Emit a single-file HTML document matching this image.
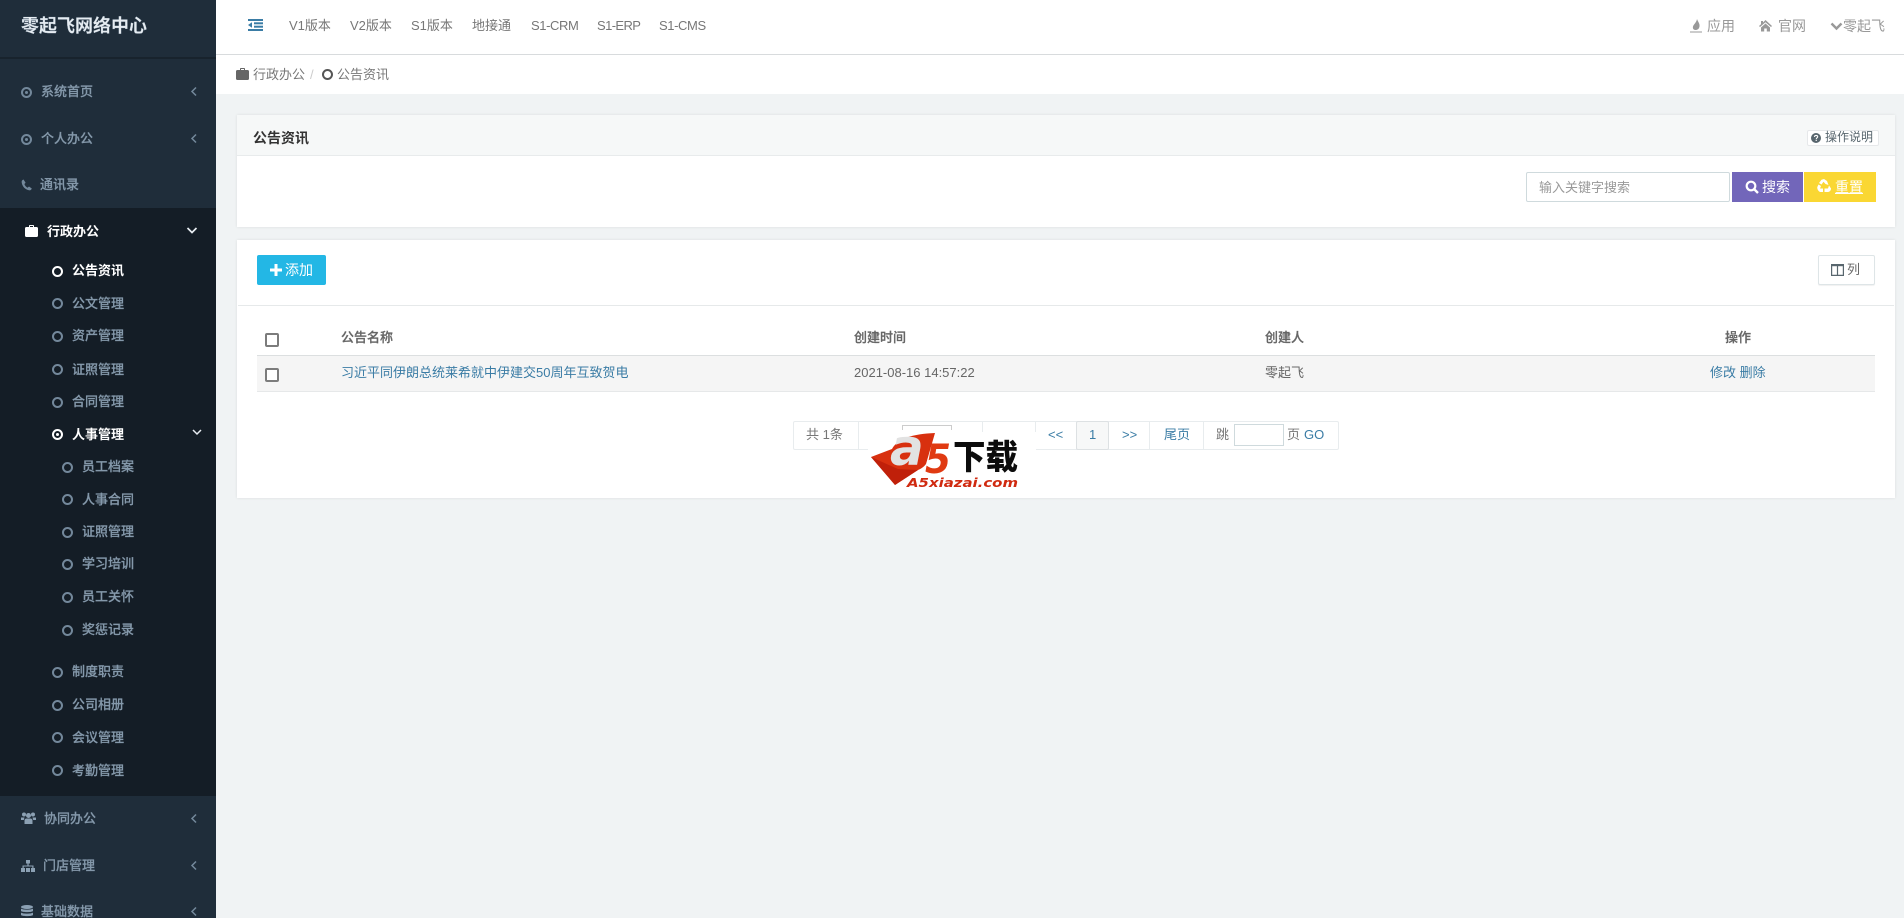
<!DOCTYPE html>
<html lang="zh-CN"><head><meta charset="utf-8"><title>公告资讯</title>
<style>
*{box-sizing:border-box}
html,body{margin:0;padding:0;width:1904px;height:918px;overflow:hidden;background:#f0f3f4;font-family:"Liberation Sans","Noto Sans CJK SC",sans-serif;font-size:13px;color:#58666e}
.a{position:absolute;white-space:nowrap}
.t{position:absolute;white-space:nowrap;line-height:20px;height:20px}
#side{position:absolute;left:0;top:0;width:216px;height:918px;background:#1f2d3a;overflow:hidden}
#sub{position:absolute;left:0;top:208px;width:216px;height:588px;background:#141d26}
#side .t{color:#8498aa;font-weight:500;-webkit-text-stroke:.2px #8498aa}
#side .w{color:#fff;font-weight:700;-webkit-text-stroke:0}
.r{position:absolute;width:11px;height:11px;border:2px solid #73889b;border-radius:50%}
.r.w2{border-color:#fff}
.rd{position:absolute;width:11px;height:11px;border:2px solid #73889b;border-radius:50%}
.rd:after{content:"";position:absolute;left:2px;top:2px;width:3px;height:3px;background:#73889b;border-radius:50%}
.rd.w2{border-color:#fff}.rd.w2:after{background:#fff}
svg{position:absolute;display:block}
.bar{position:absolute;background:#fff}
.nav{position:absolute;top:16px;line-height:20px;color:#777;font-size:13px;white-space:nowrap}
.panel{position:absolute;left:237px;width:1658px;background:#fff;box-shadow:0 0 3px rgba(0,0,0,.09)}
.cb{position:absolute;width:14px;height:14px;border:2px solid #7c7c7c;border-radius:2px;background:#fff}
.lnk{color:#3a7ca5}
.sep{position:absolute;top:421px;width:1px;height:29px;background:#e8ecee}
.h{color:#666;font-weight:500;-webkit-text-stroke:.25px #666}
</style></head><body>

<div id="side">
<div id="sub"></div>
<div class="a" style="left:0;top:57px;width:216px;height:2px;background:#18232d"></div>
<div class="t" style="left:21px;top:15px;font-size:18px;font-weight:700;color:#e6ecf1;line-height:22px;height:22px">零起飞网络中心</div>

<div class="rd" style="left:21px;top:87px"></div><div class="t" style="left:41px;top:82px">系统首页</div>
<svg style="left:190px;top:86px" width="8" height="11" viewBox="0 0 8 11"><path d="M6 1.5 2 5.500 6 9.500" fill="none" stroke="#73889b" stroke-width="1.500"/></svg>
<div class="rd" style="left:21px;top:134px"></div><div class="t" style="left:41px;top:129px">个人办公</div>
<svg style="left:190px;top:133px" width="8" height="11" viewBox="0 0 8 11"><path d="M6 1.5 2 5.500 6 9.500" fill="none" stroke="#73889b" stroke-width="1.500"/></svg>
<svg style="left:21px;top:179px" width="11" height="12" viewBox="0 0 11 12"><path d="M2.500 .5C1 1 .5 2 .7 3.500 1.300 7.500 4 10.500 8 11.300c1.300.2 2.400-.4 2.800-1.800L8 7.500 6.500 8.700C5 8 3.800 6.500 3.400 5L4.600 3.700Z" fill="#73889b"/></svg>
<div class="t" style="left:40px;top:175px">通讯录</div>

<svg style="left:25px;top:225px" width="13" height="12" viewBox="0 0 13 12"><path d="M4 2V.8C4 .4 4.300 0 4.800 0h3.400C8.700 0 9 .4 9 .8V2h2.600c.8 0 1.400.6 1.400 1.400v7.200c0 .8-.6 1.400-1.400 1.400H1.400C.6 12 0 11.400 0 10.600V3.400C0 2.600.6 2 1.400 2ZM5 2h3V1H5Z" fill="#fff" fill-rule="evenodd"/></svg>
<div class="t w" style="left:47px;top:222px">行政办公</div>
<svg style="left:186px;top:226px" width="12" height="9" viewBox="0 0 12 9"><path d="M1.500 2 6 6.500 10.500 2" fill="none" stroke="#e8edf2" stroke-width="1.700"/></svg>

<div class="r w2" style="left:52px;top:266px"></div><div class="t w" style="left:72px;top:261px">公告资讯</div>
<div class="r" style="left:52px;top:298px"></div><div class="t" style="left:72px;top:294px">公文管理</div>
<div class="r" style="left:52px;top:331px"></div><div class="t" style="left:72px;top:326px">资产管理</div>
<div class="r" style="left:52px;top:364px"></div><div class="t" style="left:72px;top:360px">证照管理</div>
<div class="r" style="left:52px;top:397px"></div><div class="t" style="left:72px;top:392px">合同管理</div>
<div class="rd w2" style="left:52px;top:429px"></div><div class="t w" style="left:72px;top:425px">人事管理</div>
<svg style="left:191px;top:428px" width="12" height="9" viewBox="0 0 12 9"><path d="M2 2 6 6 10 2" fill="none" stroke="#e8edf2" stroke-width="1.500"/></svg>
<div class="r" style="left:62px;top:462px"></div><div class="t" style="left:82px;top:457px">员工档案</div>
<div class="r" style="left:62px;top:494px"></div><div class="t" style="left:82px;top:490px">人事合同</div>
<div class="r" style="left:62px;top:527px"></div><div class="t" style="left:82px;top:522px">证照管理</div>
<div class="r" style="left:62px;top:559px"></div><div class="t" style="left:82px;top:554px">学习培训</div>
<div class="r" style="left:62px;top:592px"></div><div class="t" style="left:82px;top:587px">员工关怀</div>
<div class="r" style="left:62px;top:625px"></div><div class="t" style="left:82px;top:620px">奖惩记录</div>
<div class="r" style="left:52px;top:667px"></div><div class="t" style="left:72px;top:662px">制度职责</div>
<div class="r" style="left:52px;top:700px"></div><div class="t" style="left:72px;top:695px">公司相册</div>
<div class="r" style="left:52px;top:732px"></div><div class="t" style="left:72px;top:728px">会议管理</div>
<div class="r" style="left:52px;top:765px"></div><div class="t" style="left:72px;top:761px">考勤管理</div>

<svg style="left:21px;top:812px" width="15" height="12" viewBox="0 0 15 12" fill="#8ba0b3"><circle cx="3" cy="2.500" r="2"/><circle cx="12" cy="2.500" r="2"/><circle cx="7.500" cy="3.500" r="2.500"/><path d="M0 5.500h3.500L2.800 8H0ZM15 5.500h-3.500l.7 2.500H15ZM3.500 12V8.500C3.500 7 4.500 6.500 5.500 6.500h4c1 0 2 .5 2 2V12Z"/></svg>
<div class="t" style="left:44px;top:809px">协同办公</div>
<svg style="left:190px;top:813px" width="8" height="11" viewBox="0 0 8 11"><path d="M6 1.5 2 5.500 6 9.500" fill="none" stroke="#73889b" stroke-width="1.500"/></svg>
<svg style="left:21px;top:860px" width="14" height="12" viewBox="0 0 14 12" fill="#8ba0b3"><rect x="5" y="0" width="4" height="3.500"/><rect x="0" y="8" width="4" height="4"/><rect x="5" y="8" width="4" height="4"/><rect x="10" y="8" width="4" height="4"/><path d="M1.500 8V5.500h4.900V3.500h1.200v2h4.900V8h-1.200V6.500H2.700V8Z"/></svg>
<div class="t" style="left:43px;top:856px">门店管理</div>
<svg style="left:190px;top:860px" width="8" height="11" viewBox="0 0 8 11"><path d="M6 1.5 2 5.500 6 9.500" fill="none" stroke="#73889b" stroke-width="1.500"/></svg>
<svg style="left:21px;top:905px" width="12" height="13" viewBox="0 0 12 13" fill="#8ba0b3"><ellipse cx="6" cy="2" rx="6" ry="2"/><path d="M0 3.500C1 5 11 5 12 3.500V6C11 7.500 1 7.500 0 6ZM0 7.500C1 9 11 9 12 7.500V10C11 11.500 1 11.500 0 10Z"/></svg>
<div class="t" style="left:41px;top:902px">基础数据</div>
<svg style="left:190px;top:906px" width="8" height="11" viewBox="0 0 8 11"><path d="M6 1.5 2 5.500 6 9.500" fill="none" stroke="#73889b" stroke-width="1.500"/></svg>
</div>

<!-- top -->
<div class="bar" style="left:216px;top:0;width:1688px;height:54px"></div>
<div class="a" style="left:216px;top:54px;width:1688px;height:1px;background:#d8dbdd"></div>
<svg style="left:248px;top:19px" width="15" height="12" viewBox="0 0 15 12" fill="#3a7ca5"><rect x="0" y="0" width="15" height="2"/><rect x="6" y="3.300" width="9" height="2"/><rect x="6" y="6.700" width="9" height="2"/><rect x="0" y="10" width="15" height="2"/><path d="M0 6 4 3.200V8.800Z"/></svg>
<div class="nav" style="left:289px">V1版本</div>
<div class="nav" style="left:350px">V2版本</div>
<div class="nav" style="left:411px">S1版本</div>
<div class="nav" style="left:472px">地接通</div>
<div class="nav" style="left:531px;letter-spacing:-.4px">S1-CRM</div>
<div class="nav" style="left:597px;letter-spacing:-.6px">S1-ERP</div>
<div class="nav" style="left:659px;letter-spacing:-.4px">S1-CMS</div>

<svg style="left:1690px;top:19px" width="12" height="14" viewBox="0 0 12 14" fill="#999"><path d="M7 0C8 3 10 4.500 9.500 7.500 9 10 7.500 11 5.500 11 3.500 11 2.500 9.500 3 7.500 3.500 5.500 6.500 3.500 7 0Z"/><rect x="0" y="12.500" width="12" height="1"/></svg>
<div class="nav" style="left:1707px;color:#999;font-size:14px">应用</div>
<svg style="left:1759px;top:20px" width="13" height="12" viewBox="0 0 13 12" fill="#999"><path d="M6.500 0 13 6 12 7 6.500 2.300 1 7 0 6 2 4.200V1h2v1.500ZM2 7.500 6.500 3.500 11 7.500V11.500H7.800V8.500H5.200V11.500H2Z"/></svg>
<div class="nav" style="left:1778px;color:#999;font-size:14px">官网</div>
<svg style="left:1830px;top:22px" width="13" height="9" viewBox="0 0 13 9"><path d="M1.500 1.500 6.500 6.500 11.500 1.500" fill="none" stroke="#999" stroke-width="2.400"/></svg>
<div class="nav" style="left:1843px;color:#999;font-size:14px">零起飞</div>

<!-- breadcrumb -->
<div class="bar" style="left:216px;top:55px;width:1688px;height:39px"></div>
<svg style="left:236px;top:68px" width="13" height="12" viewBox="0 0 13 12"><path d="M4 2V.8C4 .4 4.300 0 4.800 0h3.400C8.700 0 9 .4 9 .8V2h2.600c.8 0 1.400.6 1.400 1.400v7.200c0 .8-.6 1.400-1.400 1.400H1.400C.6 12 0 11.400 0 10.600V3.400C0 2.600.6 2 1.400 2ZM5 2h3V1H5Z" fill="#666" fill-rule="evenodd"/></svg>
<div class="t" style="left:253px;top:65px;color:#777">行政办公</div>
<div class="t" style="left:310px;top:65px;color:#ccc">/</div>
<div class="a" style="left:322px;top:69px;width:11px;height:11px;border:2px solid #555;border-radius:50%"></div>
<div class="t" style="left:337px;top:65px;color:#777">公告资讯</div>

<!-- panel 1 -->
<div class="panel" style="top:115px;height:112px">
  <div class="a" style="left:0;top:0;width:1658px;height:41px;background:#f6f8f8;border-bottom:1px solid #e8ebec"></div>
  <div class="t" style="left:16px;top:13px;color:#333;font-weight:700;font-size:14px">公告资讯</div>
  <div class="a" style="left:1570px;top:15px;width:72px;height:16px;background:#fff;border:1px solid #e6e8ea;border-radius:2px"></div>
  <svg style="left:1574px;top:18px" width="10" height="10" viewBox="0 0 10 10"><circle cx="5" cy="5" r="5" fill="#58666e"/><path d="M3.400 3.900C3.500 2.900 4.200 2.400 5.100 2.400 6 2.400 6.700 3 6.700 3.800 6.700 4.800 5.300 4.900 5.300 6" fill="none" stroke="#fff" stroke-width="1.100"/><rect x="4.600" y="6.700" width="1.300" height="1.200" fill="#fff"/></svg>
  <div class="t" style="left:1588px;top:12px;font-size:12px;color:#58666e">操作说明</div>
  <div class="a" style="left:1289px;top:57px;width:204px;height:30px;background:#fff;border:1px solid #cfdadd;border-radius:2px"></div>
  <div class="t" style="left:1302px;top:63px;color:#999">输入关键字搜索</div>
  <div class="a" style="left:1495px;top:57px;width:71px;height:30px;background:#7266ba"></div>
  <svg style="left:1508px;top:65px" width="14" height="14" viewBox="0 0 14 14"><circle cx="6" cy="6" r="4.300" fill="none" stroke="#fff" stroke-width="2.200"/><path d="M9 9 13 13" stroke="#fff" stroke-width="2.400"/></svg>
  <div class="t" style="left:1525px;top:62px;color:#fff;font-size:14px">搜索</div>
  <div class="a" style="left:1567px;top:57px;width:72px;height:30px;background:#fad733"></div>
  <svg style="left:1580px;top:64px" width="14" height="14" viewBox="0 0 14 14" fill="#fff"><path d="M7 0 10 2 11.500 6 8.500 5 6.500 2.800 4.500 5.500 2 4 4.500 .8ZM1.500 5.500 4 7 3 9.500 6 9.500V13H3C1 12 0 9.500 .3 8ZM12 6.500 14 9.500C14 11.500 12.500 13 11 13H7.500V9.500H11Z"/></svg>
  <div class="t" style="left:1598px;top:62px;color:#fff;font-size:14px;text-decoration:underline">重置</div>
</div>

<!-- panel 2 -->
<div class="panel" style="top:240px;height:258px"></div>
<div class="a" style="left:238px;top:305px;width:1656px;height:1px;background:#e6e9ea"></div>
<div class="a" style="left:257px;top:255px;width:69px;height:30px;background:#23b7e5;border-radius:2px"></div>
<svg style="left:270px;top:264px" width="12" height="12" viewBox="0 0 12 12"><path d="M0 4.500H4.500V0H7.500V4.500H12V7.500H7.500V12H4.500V7.500H0Z" fill="#fff"/></svg>
<div class="t" style="left:285px;top:260px;color:#fff;font-size:14px">添加</div>
<div class="a" style="left:1818px;top:255px;width:57px;height:30px;background:#fff;border:1px solid #dee5e7;border-radius:2px;box-shadow:0 1px 1px rgba(0,0,0,.06)"></div>
<svg style="left:1831px;top:264px" width="13" height="12" viewBox="0 0 13 12"><path d="M.6.6H12.400V11.400H.6ZM6.500.6V11.400" fill="none" stroke="#58666e" stroke-width="1.200"/><rect x=".6" y=".6" width="11.800" height="1.600" fill="#58666e"/></svg>
<div class="t" style="left:1847px;top:260px;color:#666">列</div>

<div class="cb" style="left:265px;top:333px"></div>
<div class="t h" style="left:341px;top:328px">公告名称</div>
<div class="t h" style="left:854px;top:328px">创建时间</div>
<div class="t h" style="left:1265px;top:328px">创建人</div>
<div class="t h" style="left:1725px;top:328px">操作</div>
<div class="a" style="left:257px;top:355px;width:1618px;height:37px;background:#f5f5f5;border-top:1px solid #dcdfe0;border-bottom:1px solid #e6e8e9"></div>
<div class="cb" style="left:265px;top:368px"></div>
<div class="t lnk" style="left:341px;top:363px">习近平同伊朗总统莱希就中伊建交50周年互致贺电</div>
<div class="t" style="left:854px;top:363px;color:#666">2021-08-16 14:57:22</div>
<div class="t" style="left:1265px;top:363px;color:#666">零起飞</div>
<div class="t lnk" style="left:1710px;top:363px">修改 删除</div>

<!-- pagination -->
<div class="a" style="left:793px;top:421px;width:546px;height:29px;background:#fff;border:1px solid #e8ecee;border-radius:2px"></div>
<div class="sep" style="left:858px"></div>
<div class="sep" style="left:982px"></div>
<div class="sep" style="left:1035px"></div>
<div class="sep" style="left:1149px"></div>
<div class="sep" style="left:1203px"></div>
<div class="t" style="left:806px;top:425px;color:#777">共 1条</div>
<div class="a" style="left:902px;top:425px;width:50px;height:5px;border-top:1px solid #ccc;border-left:1px solid #ccc;border-right:1px solid #ccc"></div>
<div class="t lnk" style="left:1048px;top:425px">&lt;&lt;</div>
<div class="a" style="left:1076px;top:421px;width:33px;height:29px;background:#f7f8f8;border:1px solid #dde1e3;border-radius:2px"></div>
<div class="t lnk" style="left:1089px;top:425px">1</div>
<div class="t lnk" style="left:1122px;top:425px">&gt;&gt;</div>
<div class="t lnk" style="left:1164px;top:425px">尾页</div>
<div class="t" style="left:1216px;top:425px;color:#777">跳</div>
<div class="a" style="left:1234px;top:424px;width:50px;height:22px;background:#fff;border:1px solid #cfdadd"></div>
<div class="t" style="left:1287px;top:425px;color:#777">页</div>
<div class="t lnk" style="left:1304px;top:425px">GO</div>

<!-- logo -->
<div class="a" style="left:868px;top:432px;width:168px;height:60px;background:#fff"></div>
<svg style="left:868px;top:428px" width="170" height="64" viewBox="0 0 170 64">
<path d="M3 29 L24 21 C30 10 45 6 67 5 L58 36 C55 40 52 41 50 42 L27 57 Z" fill="#d8300f"/>
<path d="M3 29 L30 41 L50 42 L27 57 Z" fill="#c0200a"/>
<text x="22" y="37" font-family="'DejaVu Sans',sans-serif" font-size="50" font-weight="700" font-style="italic" fill="#e2e2e2">a</text>
<text x="57" y="45" font-family="'DejaVu Sans',sans-serif" font-size="40" font-weight="700" font-style="italic" fill="#e03a12" textLength="26" lengthAdjust="spacingAndGlyphs">5</text>
<text x="85" y="41" font-family="'Noto Sans CJK SC',sans-serif" font-size="34" font-weight="900" fill="#0c0c0c" textLength="65" lengthAdjust="spacingAndGlyphs">下载</text>
<text x="39" y="59" font-family="'DejaVu Sans',sans-serif" font-size="12.500" font-weight="700" font-style="italic" fill="#d02a10" textLength="111" lengthAdjust="spacingAndGlyphs">A5xiazai.com</text>
</svg>
</body></html>
